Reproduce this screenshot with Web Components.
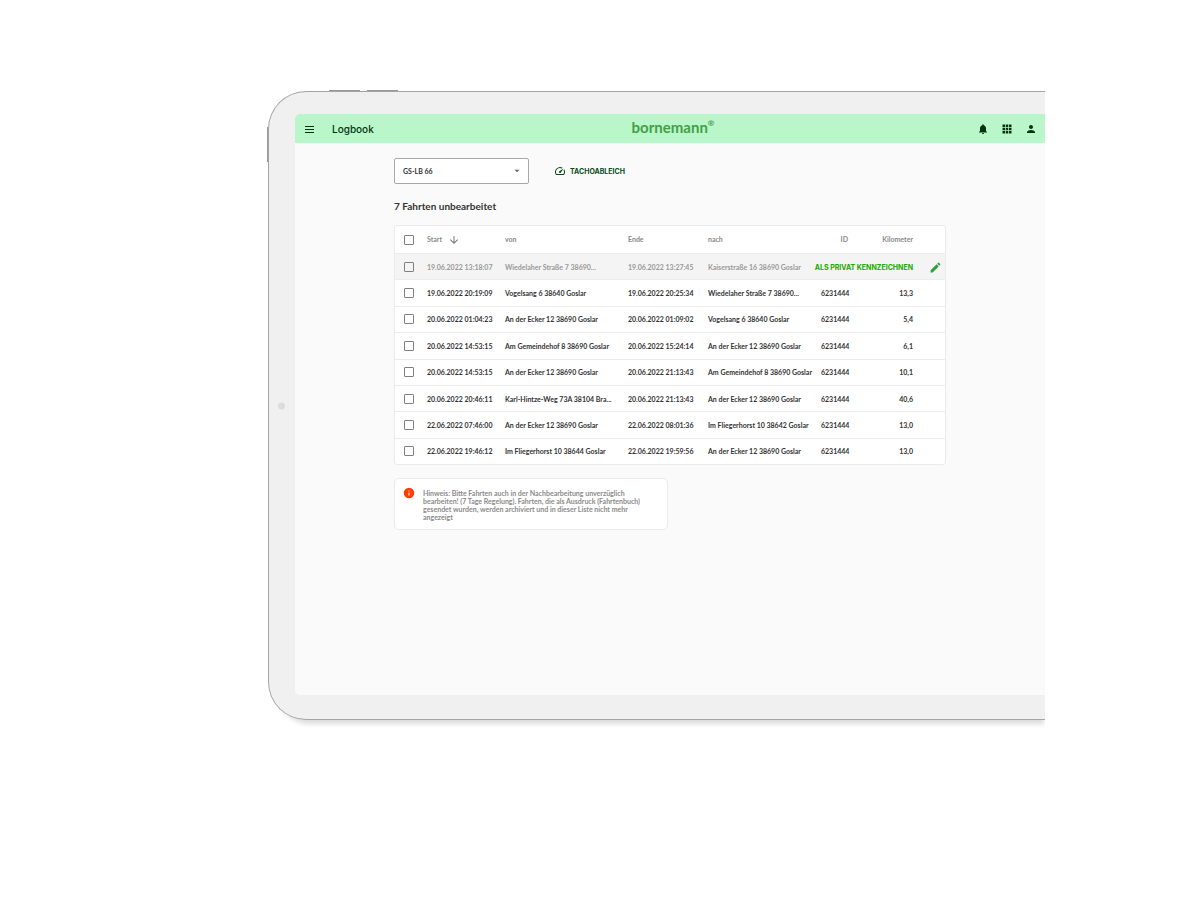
<!DOCTYPE html>
<html lang="de">
<head>
<meta charset="utf-8">
<title>Logbook</title>
<style>
  body {
    margin: 0;
    padding: 91px 155px 40px 268px;
    background: #fff;
    color: #333;
    font-family: Lato, "Open Sans", sans-serif;
    font-size: 7px;
  }
</style>
</head>
<body>
<tablet-frame>
  <app-bar slot="bar" heading="Logbook" brand="bornemann"></app-bar>
  <vehicle-toolbar></vehicle-toolbar>
  <trip-table heading="7 Fahrten unbearbeitet"></trip-table>
  <info-note>Hinweis: Bitte Fahrten auch in der Nachbearbeitung unverzüglich<br>bearbeiten! (7 Tage Regelung). Fahrten, die als Ausdruck (Fahrtenbuch)<br>gesendet wurden, werden archiviert und in dieser Liste nicht mehr<br>angezeigt</info-note>
</tablet-frame>

<script>
// ============================================================================
// Tablet Frame
// ============================================================================
class TabletFrame extends HTMLElement {
    constructor() {
        super();
        this.attachShadow({ mode: 'open' });
    }
    connectedCallback() {
        this.shadowRoot.innerHTML = `
      <style>
        :host { display: block; position: relative; clip-path: inset(-20px 0 -20px -20px); }
        .case { padding: 22px 0 24px 26px; background: #f0f0f0; border: 1px solid #a4a4a4; border-right: none; border-radius: 38px 0 0 38px; box-shadow: 4px 9px 5px -5px rgba(0, 0, 0, .14); }
        .screen { min-height: 581px; background: #fafafa; border-radius: 5px 0 0 5px; overflow: hidden; }
        main { display: flex; flex-direction: column; padding: 15px 99px; }
        .key { position: absolute; background: #999; }
        .key.up { top: -1px; left: 61px; width: 31px; height: 1px; }
        .key.down { top: -1px; left: 99px; width: 31px; height: 1px; }
        .key.power { top: 36px; left: -1px; width: 1px; height: 35px; }
        .camera { position: absolute; top: 50%; left: 10px; width: 7px; height: 7px; border-radius: 50%; background: #dcdcdc; transform: translateY(-50%); }
      </style>
      <div class="case">
        <div class="screen">
          <slot name="bar"></slot>
          <main><slot></slot></main>
        </div>
      </div>
      <span class="key up"></span>
      <span class="key down"></span>
      <span class="key power"></span>
      <span class="camera"></span>
    `;
    }
}
customElements.define('tablet-frame', TabletFrame);
// ============================================================================
// App Bar
// ============================================================================
class AppBar extends HTMLElement {
    constructor() {
        super();
        this.attachShadow({ mode: 'open' });
    }
    connectedCallback() {
        const heading = this.getAttribute('heading') || '';
        const brand = this.getAttribute('brand') || '';
        this.shadowRoot.innerHTML = `
      <style>
        :host { display: block; background: #b9f6ca; color: #06330f; }
        header { display: grid; grid-template-columns: 1fr auto 1fr; align-items: center; height: 29px; padding: 0 8px; }
        .left { display: flex; align-items: center; gap: 17px; }
        .right { display: flex; align-items: center; justify-content: flex-end; gap: 12px; }
        h1 { margin: 0; font: 500 10px/12px Inter, sans-serif; }
        button { display: flex; padding: 0; border: none; background: none; color: inherit; cursor: pointer; }
        svg { display: block; width: 12px; height: 12px; fill: currentColor; }
        .brand { display: flex; margin-left: 6px; padding-bottom: 4px; color: #43a047; font-size: 15px; line-height: 16px; font-weight: 700; text-decoration: none; }
        .brand sup { font-size: 8px; line-height: 9px; }
      </style>
      <header>
        <div class="left">
          <button aria-label="Menü"><svg viewBox="0 0 12 12"><path d="M2 3h9v1H2zm0 3h9v1H2zm0 3h9v1H2z"/></svg></button>
          <h1>${heading}</h1>
        </div>
        <a class="brand" href="#">${brand}<sup>®</sup></a>
        <div class="right">
          <button aria-label="Benachrichtigungen"><svg viewBox="0 0 24 24"><path d="M12 22c1.100 0 2-.9 2-2h-4c0 1.100.9 2 2 2zm6-6v-5c0-3.070-1.640-5.640-4.500-6.320V4c0-.83-.67-1.500-1.500-1.500s-1.500.67-1.500 1.500v.68C7.630 5.360 6 7.920 6 11v5l-2 2v1h16v-1l-2-2z"/></svg></button>
          <button aria-label="Apps"><svg viewBox="0 0 24 24"><path d="M3 3h5v5H3zm6.500 0h5v5h-5zM16 3h5v5h-5zM3 9.500h5v5H3zm6.500 0h5v5h-5zm6.500 0h5v5h-5zM3 16h5v5H3zm6.500 0h5v5h-5zm6.500 0h5v5h-5z"/></svg></button>
          <button aria-label="Profil"><svg viewBox="0 0 24 24"><path d="M12 12c2.210 0 4-1.790 4-4s-1.790-4-4-4-4 1.790-4 4 1.790 4 4 4zm0 2c-2.670 0-8 1.340-8 4v2h16v-2c0-2.660-5.330-4-8-4z"/></svg></button>
        </div>
      </header>
    `;
    }
}
customElements.define('app-bar', AppBar);
// ============================================================================
// Vehicle Toolbar
// ============================================================================
class VehicleToolbar extends HTMLElement {
    constructor() {
        super();
        this.attachShadow({ mode: 'open' });
    }
    connectedCallback() {
        this.shadowRoot.innerHTML = `
      <style>
        :host { display: flex; align-items: center; gap: 25px; }
        .field { display: grid; align-items: center; width: 135px; }
        .field > * { grid-area: 1 / 1; }
        select { appearance: none; box-sizing: border-box; height: 26px; padding: 0 8px; border: 1px solid #a8a8a8; border-radius: 2px; background: #fff; color: #333; font: 700 7px/9px Lato, sans-serif; }
        .field svg { justify-self: end; margin-right: 7px; width: 10px; height: 10px; fill: #666; pointer-events: none; }
        button { display: flex; align-items: center; gap: 4px; padding: 0; border: none; background: none; color: #0b4a1a; font: 700 7px/9px Inter, sans-serif; cursor: pointer; }
        button svg { width: 12px; height: 12px; fill: currentColor; }
      </style>
      <div class="field">
        <select aria-label="Fahrzeug"><option>GS-LB 66</option></select>
        <svg viewBox="0 0 24 24"><path d="M6 9l6 6 6-6z"/></svg>
      </div>
      <button><svg viewBox="0 0 24 24"><path d="M20.380 8.570l-1.230 1.850a8 8 0 0 1-.22 7.580H5.070A8 8 0 0 1 15.580 6.850l1.850-1.230A10 10 0 0 0 3.350 19a2 2 0 0 0 1.720 1h13.850a2 2 0 0 0 1.740-1 10 10 0 0 0-.27-10.440z"/><path d="M10.590 15.410a2 2 0 0 0 2.830 0l5.660-8.490-8.490 5.660a2 2 0 0 0 0 2.830z"/></svg>TACHOABLEICH</button>
    `;
    }
}
customElements.define('vehicle-toolbar', VehicleToolbar);
// ============================================================================
// Trip Table
// ============================================================================
const TRIPS = [
    { start: '19.06.2022 13:18:07', from: 'Wiedelaher Straße 7 38690...', end: '19.06.2022 13:27:45', to: 'Kaiserstraße 16 38690 Goslar', active: true },
    { start: '19.06.2022 20:19:09', from: 'Vogelsang 6 38640 Goslar', end: '19.06.2022 20:25:34', to: 'Wiedelaher Straße 7 38690...', id: '6231444', km: '13,3' },
    { start: '20.06.2022 01:04:23', from: 'An der Ecker 12 38690 Goslar', end: '20.06.2022 01:09:02', to: 'Vogelsang 6 38640 Goslar', id: '6231444', km: '5,4' },
    { start: '20.06.2022 14:53:15', from: 'Am Gemeindehof 8 38690 Goslar', end: '20.06.2022 15:24:14', to: 'An der Ecker 12 38690 Goslar', id: '6231444', km: '6,1' },
    { start: '20.06.2022 14:53:15', from: 'An der Ecker 12 38690 Goslar', end: '20.06.2022 21:13:43', to: 'Am Gemeindehof 8 38690 Goslar', id: '6231444', km: '10,1' },
    { start: '20.06.2022 20:46:11', from: 'Karl-Hintze-Weg 73A 38104 Bra...', end: '20.06.2022 21:13:43', to: 'An der Ecker 12 38690 Goslar', id: '6231444', km: '40,6' },
    { start: '22.06.2022 07:46:00', from: 'An der Ecker 12 38690 Goslar', end: '22.06.2022 08:01:36', to: 'Im Fliegerhorst 10 38642 Goslar', id: '6231444', km: '13,0' },
    { start: '22.06.2022 19:46:12', from: 'Im Fliegerhorst 10 38644 Goslar', end: '22.06.2022 19:59:56', to: 'An der Ecker 12 38690 Goslar', id: '6231444', km: '13,0' },
];
class TripTable extends HTMLElement {
    constructor() {
        super();
        this.attachShadow({ mode: 'open' });
    }
    connectedCallback() {
        this.render();
        this.setupSelection();
    }
    setupSelection() {
        const all = this.shadowRoot.querySelector('thead input');
        all.addEventListener('change', () => {
            this.shadowRoot.querySelectorAll('tbody input').forEach((box) => {
                box.checked = all.checked;
            });
        });
    }
    renderRow(trip) {
        const rest = trip.active
            ? `<td colspan="2"><button class="private">ALS PRIVAT KENNZEICHNEN</button></td>
               <td><button class="edit" aria-label="Bearbeiten"><svg viewBox="0 0 24 24"><path d="M3 17.250V21h3.750L17.810 9.940l-3.750-3.750L3 17.250zM20.710 7.040a1 1 0 0 0 0-1.410l-2.340-2.340a1 1 0 0 0-1.410 0l-1.830 1.830 3.750 3.750 1.830-1.830z"/></svg></button></td>`
            : `<td class="num">${trip.id}</td><td class="num">${trip.km}</td><td></td>`;
        return `
      <tr class="${trip.active ? 'active' : ''}">
        <td><input type="checkbox" aria-label="Fahrt ${trip.start}"></td>
        <td>${trip.start}</td><td>${trip.from}</td><td>${trip.end}</td><td>${trip.to}</td>
        ${rest}
      </tr>`;
    }
    render() {
        this.shadowRoot.innerHTML = `
      <style>
        :host { display: block; margin-top: 15px; }
        h2 { margin: 0 0 12px; font-size: 10px; line-height: 14px; font-weight: 700; }
        .card { border: 1px solid #ebebeb; border-radius: 3px; background: #fff; overflow: hidden; }
        table { width: 100%; height: 238px; table-layout: fixed; border-collapse: separate; border-spacing: 0; line-height: 9px; }
        th, td { padding: 0; text-align: left; vertical-align: middle; white-space: nowrap; }
        th { height: 27px; color: #8a8a8a; font-weight: 700; }
        td { height: 25px; border-top: 1px solid #ececec; font-weight: 700; }
        td + td { padding-top: 1px; box-sizing: border-box; }
        .num { text-align: right; }
        .active td { background: #f4f4f4; color: #999; font-weight: 700; }
        .sort { display: flex; align-items: center; gap: 6px; }
        .sort svg { width: 12px; height: 12px; fill: #777; }
        input { display: block; appearance: none; box-sizing: border-box; width: 10px; height: 10px; margin: 0 0 0 9px; border: 1px solid #808080; border-radius: 1px; background: #fff; }
        input:checked { background: #43a047; }
        .active input { background: none; }
        button { padding: 0; border: none; background: none; cursor: pointer; }
        .private { display: flex; justify-content: flex-end; width: 100%; color: #18a800; font: 700 7px/9px Inter, sans-serif; }
        .edit { display: block; margin-left: 16px; }
        .edit svg { display: block; width: 13px; height: 13px; fill: #2e9e3e; }
        .c-check { width: 32px; } .c-start { width: 78px; } .c-from { width: 123px; } .c-end { width: 80px; }
        .c-id { width: 27px; } .c-km { width: 65px; } .c-edit { width: 32px; }
      </style>
      <h2>${this.getAttribute('heading') || ''}</h2>
      <div class="card">
        <table>
          <colgroup><col class="c-check"><col class="c-start"><col class="c-from"><col class="c-end"><col><col class="c-id"><col class="c-km"><col class="c-edit"></colgroup>
          <thead>
            <tr>
              <th><input type="checkbox" aria-label="Alle Fahrten"></th>
              <th><span class="sort">Start <svg viewBox="0 0 24 24"><path d="M20 12l-1.410-1.410L13 16.170V4h-2v12.170l-5.580-5.590L4 12l8 8z"/></svg></span></th>
              <th>von</th><th>Ende</th><th>nach</th><th class="num">ID</th><th class="num">Kilometer</th><th></th>
            </tr>
          </thead>
          <tbody>${TRIPS.map((trip) => this.renderRow(trip)).join('')}</tbody>
        </table>
      </div>
    `;
    }
}
customElements.define('trip-table', TripTable);
// ============================================================================
// Info Note
// ============================================================================
class InfoNote extends HTMLElement {
    constructor() {
        super();
        this.attachShadow({ mode: 'open' });
    }
    connectedCallback() {
        this.shadowRoot.innerHTML = `
      <style>
        :host { display: flex; align-items: flex-start; gap: 8px; box-sizing: border-box; width: 274px; margin-top: 13px; padding: 8px; border: 1px solid #ebebeb; border-radius: 5px; background: #fff; }
        svg { flex: none; width: 12px; height: 12px; }
        p { margin: 2px 0 0; color: #8a8a8a; font-weight: 700; line-height: 8px; white-space: nowrap; }
      </style>
      <svg viewBox="0 0 24 24"><circle cx="12" cy="12" r="10.500" fill="#ff3d00"/><path d="M11 7h2v2h-2zm0 4h2v6h-2z" fill="#fff"/></svg>
      <p><slot></slot></p>
    `;
    }
}
customElements.define('info-note', InfoNote);
</script>
</body>
</html>
